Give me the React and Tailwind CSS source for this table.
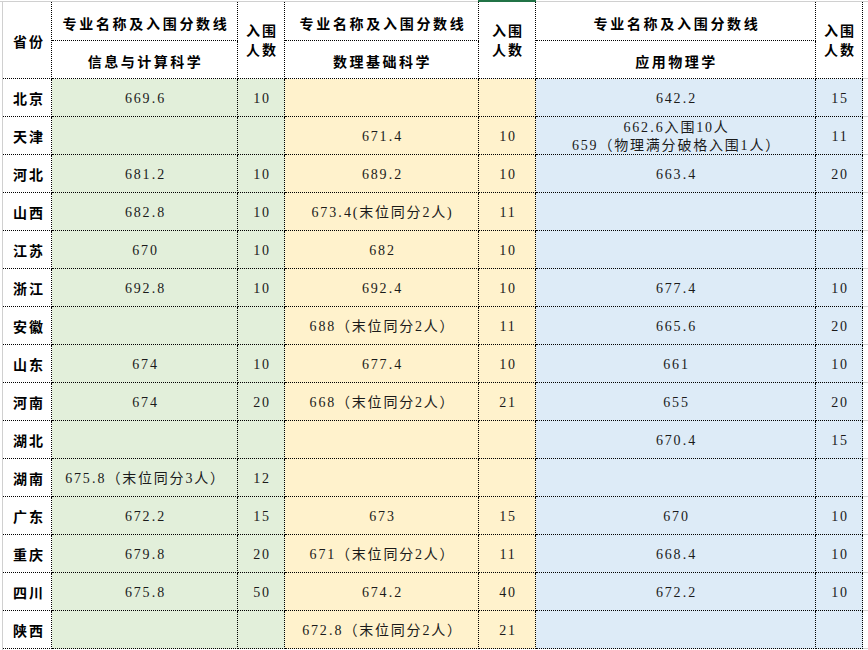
import React from "react";

const rows = [
  ["北京", "669.6", "10", "", "", "642.2", "15"],
  ["天津", "", "", "671.4", "10", ["662.6入围10人", "659（物理满分破格入围1人）"], "11"],
  ["河北", "681.2", "10", "689.2", "10", "663.4", "20"],
  ["山西", "682.8", "10", "673.4(末位同分2人)", "11", "", ""],
  ["江苏", "670", "10", "682", "10", "", ""],
  ["浙江", "692.8", "10", "692.4", "10", "677.4", "10"],
  ["安徽", "", "", "688（末位同分2人）", "11", "665.6", "20"],
  ["山东", "674", "10", "677.4", "10", "661", "10"],
  ["河南", "674", "20", "668（末位同分2人）", "21", "655", "20"],
  ["湖北", "", "", "", "", "670.4", "15"],
  ["湖南", "675.8（末位同分3人）", "12", "", "", "", ""],
  ["广东", "672.2", "15", "673", "15", "670", "10"],
  ["重庆", "679.8", "20", "671（末位同分2人）", "11", "668.4", "10"],
  ["四川", "675.8", "50", "674.2", "40", "672.2", "10"],
  ["陕西", "", "", "672.8（末位同分2人）", "21", "", ""],
];

const bgs = ["bg-white", "bg-[#E2EFDA]", "bg-[#E2EFDA]", "bg-[#FFF2CC]", "bg-[#FFF2CC]", "bg-[#DDEBF7]", "bg-[#DDEBF7]"];

function Txt({ t }) {
  const parts = t.split(".");
  const out = [];
  parts.forEach((p, i) => {
    if (i > 0)
      out.push(
        <span key={"d" + i} className="inline-block w-[6px] text-center">
          .
        </span>
      );
    out.push(<span key={"p" + i}>{p}</span>);
  });
  return <>{out}</>;
}

const dot = "border-r border-b border-dotted border-black";

export default function App() {
  return (
    <div
      className="w-[868px] h-[650px] bg-white flex flex-col overflow-hidden text-black"
      style={{ fontFamily: '"Liberation Serif", "Noto Sans CJK SC", serif' }}
    >
      <div className="flex h-[2px] shrink-0">
        <div className="w-[478px] h-[2px] border-b border-[#d0d0d0]" />
        <div className="w-[58px] h-[2px] bg-[#217346]" />
        <div className="flex-1 h-[2px] border-b border-[#d0d0d0]" />
      </div>
      <div className="flex flex-1">
        <div className="w-[3px] border-r border-[#d0d0d0]" />
        <div className="grid grid-cols-[49px_186px_47px_194px_57px_280px_47px_5px] grid-rows-[39px_38px_repeat(15,38px)]">
          <div
            className={`row-span-2 ${dot} flex items-center justify-center font-bold text-[14px] tracking-[2px] pt-[3px] pl-[4px]`}
            style={{ fontFamily: '"Noto Sans CJK SC", sans-serif' }}
          >
            省份
          </div>
          {["信息与计算科学", "数理基础科学", "应用物理学"].map((n, i) => (
            <React.Fragment key={"h" + i}>
              <div
                className={`${dot} flex items-center justify-center font-bold text-[14px] tracking-[2.7px] pt-[5px] pl-[3px]`}
                style={{ fontFamily: '"Noto Sans CJK SC", sans-serif' }}
              >
                专业名称及入围分数线
              </div>
              <div
                className={`row-span-2 ${dot} flex flex-col items-center justify-center font-bold text-[14px] tracking-[2px] leading-[19px] pl-[2px]`}
                style={{ fontFamily: '"Noto Sans CJK SC", sans-serif' }}
              >
                <span>入围</span>
                <span>人数</span>
              </div>
            </React.Fragment>
          ))}
          <div className="row-span-2 border-b border-[#d0d0d0]" />
          {["信息与计算科学", "数理基础科学", "应用物理学"].map((n, i) => (
            <div
              key={"s" + i}
              className={`${dot} flex items-center justify-center font-bold text-[14px] tracking-[2.5px] pt-[3px] pl-[2px]`}
              style={{ fontFamily: '"Noto Sans CJK SC", sans-serif' }}
            >
              {n}
            </div>
          ))}
          {rows.map((r, ri) => (
            <React.Fragment key={"r" + ri}>
              {r.map((c, ci) =>
                ci === 0 ? (
                  <div
                    key={ci}
                    className={`${dot} bg-white flex items-center justify-center font-bold text-[14px] tracking-[2px] pl-[4px] pt-[2px]`}
                    style={{ fontFamily: '"Noto Sans CJK SC", sans-serif' }}
                  >
                    {c}
                  </div>
                ) : (
                  <div
                    key={ci}
                    className={`${dot} ${bgs[ci]} flex flex-col items-center justify-center text-[14px] tracking-[1.8px] leading-[18px] text-[#1a1a1a] pt-[2px] pl-[2px]`}
                  >
                    {Array.isArray(c) ? (
                      c.map((l, li) => (
                        <span key={li}>
                          <Txt t={l} />
                        </span>
                      ))
                    ) : (
                      <span>
                        <Txt t={c} />
                      </span>
                    )}
                  </div>
                )
              )}
              <div className="border-b border-[#d0d0d0]" />
            </React.Fragment>
          ))}
        </div>
      </div>
    </div>
  );
}
